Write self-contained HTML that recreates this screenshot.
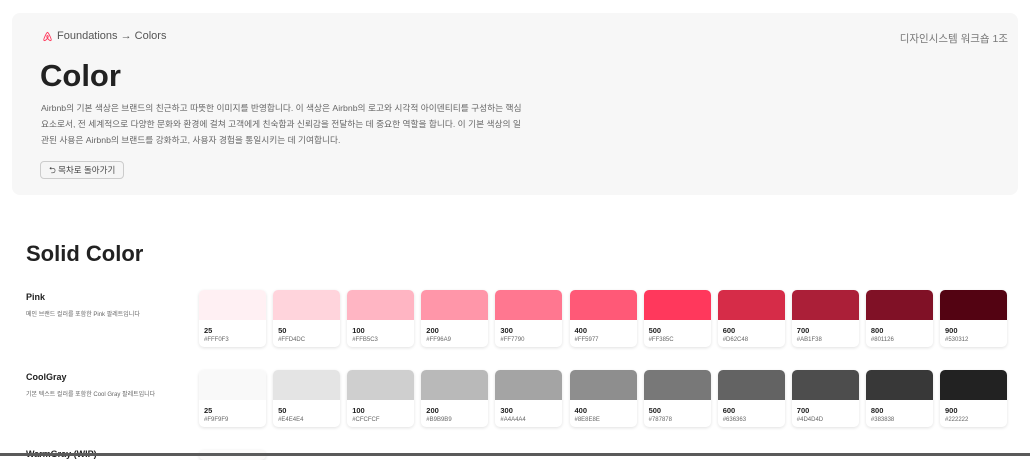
<!DOCTYPE html><html><head><meta charset="utf-8"><style>
*{margin:0;padding:0;box-sizing:border-box}
body{width:1030px;height:456px;overflow:hidden;background:#fff;font-family:"Liberation Sans","Noto Sans CJK KR",sans-serif;position:relative;color:#222}
.hd{position:absolute;left:12px;top:13px;width:1006px;height:182px;background:#f7f7f7;border-radius:8px}
.bc{position:absolute;left:42px;top:30px;font-size:11px;color:#555;display:flex;align-items:center;gap:4px}
.rt{position:absolute;right:22px;top:31px;font-size:10.5px;color:#777}
h1{position:absolute;left:40px;top:58px;font-size:31px;font-weight:bold;color:#222}
.p{position:absolute;left:41px;top:100px;width:482px;font-size:8.7px;line-height:16px;color:#666}
.btn{position:absolute;left:40px;top:161px;width:84px;height:18px;border:1px solid #ccc;border-radius:4px;background:#f5f5f5;font-size:8.5px;color:#444;padding-left:8px;line-height:16px}
h2{position:absolute;left:26px;top:241px;font-size:22px;font-weight:bold;color:#222}
.lab{position:absolute;left:26px;font-size:9px;font-weight:bold;color:#222}
.ds{position:absolute;left:26px;font-size:6px;color:#666}
.card{position:absolute;width:67px;height:57px;border-radius:5px;background:#fff;box-shadow:0 1px 3px rgba(0,0,0,.12);overflow:hidden}
.card .c{height:30px}
.card b{display:block;font-size:7.5px;margin:6px 0 0 5px;color:#222}
.card span{display:block;font-size:6px;margin:2px 0 0 5px;color:#666}
.bar{position:absolute;left:0;top:453px;width:1030px;height:3px;background:#5a5a5a}
</style></head><body>
<div class="hd"></div>
<div class="bc"><svg width="11" height="11" viewBox="0 0 24 24" fill="none" stroke="#ff385c" stroke-width="2"><path d="M12 3C10 3 3 18 4 20c1 2 4 1 8-4 4 5 7 6 8 4 1-2-6-17-8-17zM12 16c-2-3-2-6 0-6s2 3 0 6z"/></svg>Foundations → Colors</div>
<div class="rt">디자인시스템 워크숍 1조</div>
<h1>Color</h1>
<div class="p">Airbnb의 기본 색상은 브랜드의 친근하고 따뜻한 이미지를 반영합니다. 이 색상은 Airbnb의 로고와 시각적 아이덴티티를 구성하는 핵심 요소로서, 전 세계적으로 다양한 문화와 환경에 걸쳐 고객에게 친숙함과 신뢰감을 전달하는 데 중요한 역할을 합니다. 이 기본 색상의 일관된 사용은 Airbnb의 브랜드를 강화하고, 사용자 경험을 통일시키는 데 기여합니다.</div>
<div class="btn">⮌ 목차로 돌아가기</div>
<h2>Solid Color</h2>
<div class="lab" style="top:292px">Pink</div><div class="ds" style="top:309px">메인 브랜드 컬러를 포함한 Pink 팔레트입니다</div>
<div class="lab" style="top:372px">CoolGray</div><div class="ds" style="top:389px">기본 텍스트 컬러를 포함한 Cool Gray 팔레트입니다</div>
<div class="lab" style="top:449px">WarmGray (WIP)</div>
<div id="g"></div>
<div class="card" style="left:199px;top:450px;height:10px;background:#fbfaf9"></div>
<div class="bar"></div>
<script>
var n=['25','50','100','200','300','400','500','600','700','800','900'];
var p=['FFF0F3','FFD4DC','FFB5C3','FF96A9','FF7790','FF5977','FF385C','D62C48','AB1F38','801126','530312'];
var q=['F9F9F9','E4E4E4','CFCFCF','B9B9B9','A4A4A4','8E8E8E','787878','636363','4D4D4D','383838','222222'];
var h='';
[[p,290],[q,370]].forEach(function(r){r[0].forEach(function(c,i){h+='<div class="card" style="left:'+(199+i*74.1)+'px;top:'+r[1]+'px"><div class="c" style="background:#'+c+'"></div><b>'+n[i]+'</b><span>#'+c+'</span></div>';});});
document.getElementById('g').innerHTML=h;
</script>
</body></html>
